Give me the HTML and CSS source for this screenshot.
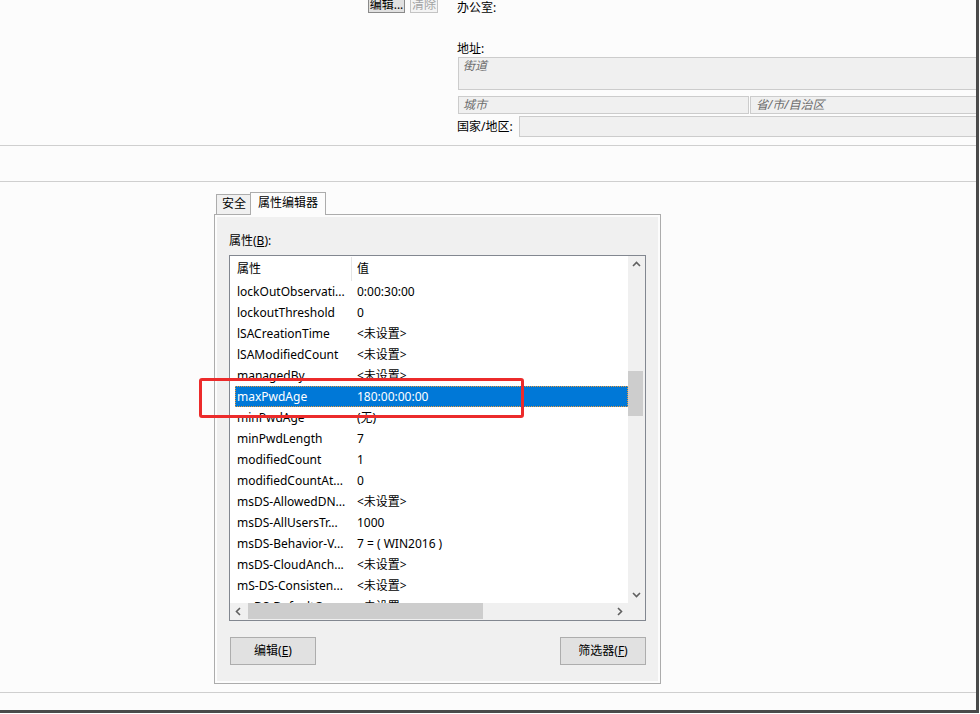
FILE: index.html
```html
<!DOCTYPE html>
<html lang="zh-CN">
<head>
<meta charset="utf-8">
<title>属性编辑器</title>
<link rel="stylesheet" href="styles.css">
</head>
<body>
<div class="window">
  <div class="top">
    <div class="top-left">
      <div class="sbtn">编辑...</div>
      <div class="sbtn disabled">清除</div>
    </div>
    <div class="top-right">
      <div class="lbl office">办公室:</div>
      <div class="lbl addr">地址:</div>
      <div class="field street">街道</div>
      <div class="row2">
        <div class="field city">城市</div>
        <div class="field prov">省/市/自治区</div>
      </div>
      <div class="row3">
        <div class="lbl country-label">国家/地区:</div>
        <div class="field country"></div>
      </div>
    </div>
  </div>
  <div class="band"></div>
  <div class="tabs-area">
    <div class="tabstrip">
      <div class="tab">安全</div>
      <div class="tab active">属性编辑器</div>
    </div>
    <div class="panel">
      <div class="plabel">属性(<u>B</u>):</div>
      <div class="list">
        <div class="content">
          <div class="hdr">
            <div class="hname">属性</div>
            <div class="hval">值</div>
          </div>
          <div class="row"><div class="n">lockOutObservati...</div><div class="v">0:00:30:00</div></div>
          <div class="row"><div class="n">lockoutThreshold</div><div class="v">0</div></div>
          <div class="row"><div class="n">lSACreationTime</div><div class="v">&lt;未设置&gt;</div></div>
          <div class="row"><div class="n">lSAModifiedCount</div><div class="v">&lt;未设置&gt;</div></div>
          <div class="row"><div class="n">managedBy</div><div class="v">&lt;未设置&gt;</div></div>
          <div class="row sel"><div class="n">maxPwdAge</div><div class="v">180:00:00:00</div></div>
          <div class="row"><div class="n">minPwdAge</div><div class="v">(无)</div></div>
          <div class="row"><div class="n">minPwdLength</div><div class="v">7</div></div>
          <div class="row"><div class="n">modifiedCount</div><div class="v">1</div></div>
          <div class="row"><div class="n">modifiedCountAt...</div><div class="v">0</div></div>
          <div class="row"><div class="n">msDS-AllowedDN...</div><div class="v">&lt;未设置&gt;</div></div>
          <div class="row"><div class="n">msDS-AllUsersTr...</div><div class="v">1000</div></div>
          <div class="row"><div class="n">msDS-Behavior-V...</div><div class="v">7 = ( WIN2016 )</div></div>
          <div class="row"><div class="n">msDS-CloudAnch...</div><div class="v">&lt;未设置&gt;</div></div>
          <div class="row"><div class="n">mS-DS-Consisten...</div><div class="v">&lt;未设置&gt;</div></div>
          <div class="row"><div class="n">msDS-DefaultQu...</div><div class="v">&lt;未设置&gt;</div></div>
        </div>
        <div class="vscroll">
          <svg class="arrow" width="17" height="17" viewBox="0 0 17 17"><polyline points="5,10 8.5,6.5 12,10" fill="none" stroke="#606060" stroke-width="1.6"/></svg>
          <div class="vthumb"></div>
          <svg class="arrow down" width="17" height="17" viewBox="0 0 17 17"><polyline points="5,7 8.5,10.5 12,7" fill="none" stroke="#606060" stroke-width="1.6"/></svg>
        </div>
        <div class="hscroll">
          <svg class="arrow" width="17" height="17" viewBox="0 0 17 17"><polyline points="10,5 6.5,8.5 10,12" fill="none" stroke="#606060" stroke-width="1.6"/></svg>
          <div class="hthumb"></div>
          <svg class="arrow right" width="17" height="17" viewBox="0 0 17 17"><polyline points="7,5 10.5,8.5 7,12" fill="none" stroke="#606060" stroke-width="1.6"/></svg>
        </div>
        <div class="corner"></div>
      </div>
      <div class="btns">
        <div class="btn first">编辑(<u>E</u>)</div>
        <div class="btn">筛选器(<u>F</u>)</div>
      </div>
    </div>
  </div>
  <div class="bottom"></div>
  <div class="redbox"></div>
</div>
</body>
</html>
```

FILE: styles.css
```css
html, body {
  margin: 0;
  padding: 0;
  background: #ffffff;
}

body {
  font-family: "Noto Sans", "Noto Sans CJK SC", sans-serif;
  font-size: 12px;
  line-height: 16px;
  color: #000000;
}

.window {
  position: relative;
  width: 976px;
  height: 710px;
  background: #fcfcfc;
  border-right: 3px solid #4a4a4a;
  border-bottom: 3px solid #4a4a4a;
  overflow: hidden;
}

/* ---------- top section ---------- */
.top {
  height: 145px;
  border-bottom: 1px solid #cfcfcf;
  display: flex;
}

.top-left {
  width: 457px;
  flex: none;
  box-sizing: border-box;
  padding-left: 368px;
  display: flex;
  align-items: flex-start;
  gap: 5px;
}

.sbtn {
  margin-top: -4px;
  width: 37px;
  height: 17px;
  box-sizing: border-box;
  border: 1px solid #8a8a8a;
  background: #e1e1e1;
  text-align: center;
  line-height: 15px;
  white-space: nowrap;
}

.sbtn.disabled {
  width: 28px;
  border-color: #c4c4c4;
  background: #f4f4f4;
  color: #a3a3a3;
}

.top-right {
  flex: 1;
  margin-right: -20px;
  display: flex;
  flex-direction: column;
}

.office {
  margin-top: 0;
}

.addr {
  margin-top: 25px;
}

.field {
  box-sizing: border-box;
  border: 1px solid #cccccc;
  background: #f0f0f0;
  color: #6d6d6d;
  font-style: italic;
  white-space: nowrap;
}

.street {
  height: 33px;
  margin-left: 1px;
  padding: 0 4px;
}

.row2 {
  display: flex;
  gap: 1px;
  margin-top: 6px;
  margin-left: 1px;
}

.city {
  width: 291px;
  height: 18px;
  padding: 0 4px;
}

.prov {
  flex: 1;
  height: 18px;
  padding: 0 5px;
}

.row3 {
  display: flex;
  align-items: center;
  margin-top: 2px;
}

.country-label {
  width: 62px;
  flex: none;
}

.country {
  flex: 1;
  height: 21px;
}

.band {
  height: 35px;
  border-bottom: 1px solid #cfcfcf;
}

/* ---------- tabs ---------- */
.tabs-area {
  padding: 10px 0 8px 214px;
}

.tabstrip {
  position: relative;
  z-index: 1;
  display: flex;
  align-items: flex-start;
  height: 23px;
  margin-bottom: -1px;
  padding-left: 2px;
}

.tab {
  box-sizing: border-box;
  height: 20px;
  margin-top: 2px;
  margin-right: -1px;
  padding: 0 4px 0 5px;
  border: 1px solid #acacac;
  border-bottom: none;
  background: #f0f0f0;
  line-height: 18px;
  white-space: nowrap;
}

.tab.active {
  height: 23px;
  margin-top: 0;
  margin-right: 0;
  padding: 0 7px;
  background: #fcfcfc;
  line-height: 20px;
}

.panel {
  width: 447px;
  height: 470px;
  box-sizing: border-box;
  border: 1px solid #acacac;
  background: #f0f0f0;
  box-shadow: inset 0 0 0 2px #fcfcfc;
  padding: 18px 14px;
}

.plabel {
  line-height: 16px;
  margin-bottom: 6px;
}

/* ---------- list ---------- */
.list {
  height: 366px;
  box-sizing: border-box;
  border: 1px solid #828790;
  background: #ffffff;
  display: grid;
  grid-template-columns: 1fr 17px;
  grid-template-rows: 1fr 17px;
}

.content {
  overflow: hidden;
  background: #ffffff;
}

.hdr {
  display: grid;
  grid-template-columns: 121px 1fr;
  height: 25px;
  align-items: center;
}

.hname {
  padding-left: 7px;
}

.hval {
  height: 24px;
  line-height: 24px;
  border-left: 1px solid #e5e5e5;
  padding-left: 5px;
  margin-top: 1px;
}

.row {
  display: grid;
  grid-template-columns: 116px 1fr;
  height: 21px;
  margin-left: 5px;
  line-height: 21px;
  white-space: nowrap;
}

.row .n {
  padding-left: 2px;
  overflow: hidden;
}

.row .v {
  padding-left: 6px;
  overflow: hidden;
}

.row.sel {
  background: #0078d7;
  color: #ffffff;
  outline: 1px dotted #e99a3c;
  outline-offset: -1px;
}

.vscroll {
  background: #f0f0f0;
  display: flex;
  flex-direction: column;
}

.arrow {
  display: block;
  flex: none;
}

.arrow.down,
.arrow.right {
  margin-top: auto;
  margin-left: auto;
}

.vthumb {
  width: 15px;
  height: 45px;
  margin: 98px 1px 0 0;
  background: #cdcdcd;
}

.hscroll {
  background: #f0f0f0;
  display: flex;
  align-items: center;
}

.hthumb {
  width: 235px;
  height: 16px;
  margin-left: 1px;
  background: #cdcdcd;
  align-self: flex-start;
}

.corner {
  background: #f0f0f0;
}

/* ---------- buttons ---------- */
.btns {
  display: flex;
  justify-content: space-between;
  margin-top: 16px;
}

.btn {
  width: 86px;
  height: 28px;
  box-sizing: border-box;
  border: 1px solid #adadad;
  background: #e1e1e1;
  text-align: center;
  line-height: 26px;
  white-space: nowrap;
}

.btn.first {
  margin-left: 1px;
}

.bottom {
  border-top: 1px solid #cfcfcf;
}

/* ---------- annotation ---------- */
.redbox {
  position: absolute;
  left: 199px;
  top: 378px;
  width: 325px;
  height: 40px;
  box-sizing: border-box;
  border: 3px solid #ec2b2b;
  border-radius: 3px;
}
```
